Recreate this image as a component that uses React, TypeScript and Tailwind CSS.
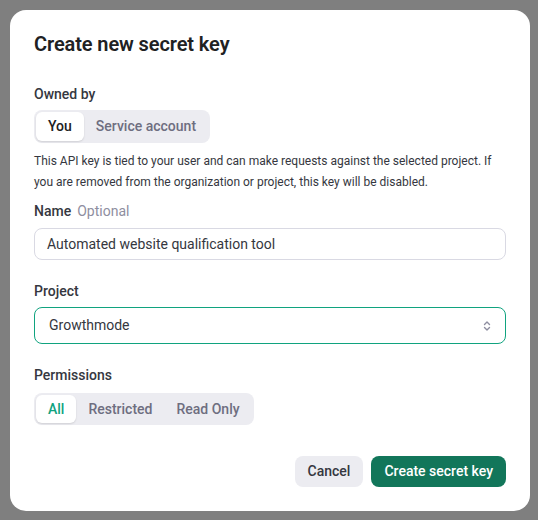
import React from "react";

export default function App() {
  return (
    <div className="w-[538px] h-[520px] bg-[#7f7f7f] p-[10px] pr-[8px] pb-[9px]" style={{ fontFamily: "Roboto, 'Noto Sans', sans-serif" }}>
      <div className="w-full h-full bg-white rounded-[16px] pt-[20px] px-[24px] pb-[24px] flex flex-col text-[#202123]">
        <h1 className="text-[20px] leading-[28px] font-semibold tracking-[-0.1px] text-[#202123]">Create new secret key</h1>

        <div className="mt-[26px] text-[14px] leading-[20px] font-medium text-[#353740]">Owned by</div>
        <div className="mt-[6px] flex">
          <div className="flex items-stretch bg-[#ececf1] rounded-[8px] p-[2px] h-[33px]">
            <div className="bg-white rounded-[6px] px-[12px] flex items-center text-[14px] font-medium text-[#202123] shadow-[0_1px_2px_rgba(0,0,0,0.12)]">You</div>
            <div className="px-[12px] flex items-center text-[14px] font-medium text-[#6e6e80]">Service account</div>
          </div>
        </div>
        <p className="mt-[8px] text-[12px] leading-[21px] text-[#353740]">
          This API key is tied to your user and can make requests against the selected project. If you are removed from the organization or project, this key will be disabled.
        </p>

        <div className="mt-[8px] text-[14px] leading-[20px]">
          <span className="font-medium text-[#353740]">Name</span>
          <span className="ml-[6px] text-[#8e8ea0]">Optional</span>
        </div>
        <div className="mt-[7px] h-[32px] border border-[#d9d9e3] rounded-[8px] flex items-center px-[12px] text-[14px] text-[#353740]">
          Automated website qualification tool
        </div>

        <div className="mt-[21px] text-[14px] leading-[20px] font-medium text-[#353740]">Project</div>
        <div className="mt-[6px] h-[37px] border border-[#10a37f] rounded-[8px] flex items-center justify-between pl-[14px] pr-[12px] text-[14px] text-[#353740]">
          <span>Growthmode</span>
          <svg width="12" height="12" viewBox="0 0 12 12" fill="none" stroke="#8e8ea0" strokeWidth="1.4" strokeLinecap="round" strokeLinejoin="round">
            <path d="M3.5 4.5 L6 2 L8.5 4.5" />
            <path d="M3.5 7.5 L6 10 L8.5 7.5" />
          </svg>
        </div>

        <div className="mt-[21px] text-[14px] leading-[20px] font-medium text-[#353740]">Permissions</div>
        <div className="mt-[8px] flex">
          <div className="flex items-stretch bg-[#ececf1] rounded-[8px] p-[2px] h-[32px]">
            <div className="bg-white rounded-[6px] px-[12px] flex items-center text-[14px] font-medium text-[#10a37f] shadow-[0_1px_2px_rgba(0,0,0,0.12)]">All</div>
            <div className="px-[12px] flex items-center text-[14px] font-medium text-[#6e6e80]">Restricted</div>
            <div className="px-[12px] flex items-center text-[14px] font-medium text-[#6e6e80]">Read Only</div>
          </div>
        </div>

        <div className="mt-auto flex justify-end gap-[8px]">
          <button className="h-[31px] px-[13px] rounded-[8px] bg-[#ececf1] text-[14px] font-medium text-[#353740]">Cancel</button>
          <button className="h-[31px] px-[13px] rounded-[8px] bg-[#12765a] text-[14px] font-medium text-white">Create secret key</button>
        </div>
      </div>
    </div>
  );
}
